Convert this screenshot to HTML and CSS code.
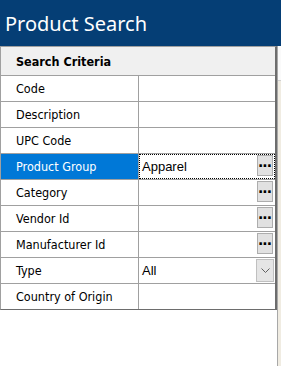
FILE: index.html
```html
<!DOCTYPE html>
<html>
<head>
<meta charset="utf-8">
<link rel="stylesheet" href="styles.css">
</head>
<body>
<div class="titlebar">Product Search</div>
<div class="body">
  <div class="grid">
    <div class="head">Search Criteria</div>
    <div class="row"><div class="label">Code</div><div class="value"></div></div>
    <div class="row"><div class="label">Description</div><div class="value"></div></div>
    <div class="row"><div class="label">UPC Code</div><div class="value"></div></div>
    <div class="row selected"><div class="label">Product Group</div><div class="value focus"><span class="text">Apparel</span><span class="btn ell">&middot;&middot;&middot;</span></div></div>
    <div class="row"><div class="label">Category</div><div class="value"><span class="text"></span><span class="btn ell">&middot;&middot;&middot;</span></div></div>
    <div class="row"><div class="label">Vendor Id</div><div class="value"><span class="text"></span><span class="btn ell">&middot;&middot;&middot;</span></div></div>
    <div class="row"><div class="label">Manufacturer Id</div><div class="value"><span class="text"></span><span class="btn ell">&middot;&middot;&middot;</span></div></div>
    <div class="row"><div class="label">Type</div><div class="value"><span class="text">All</span><span class="btn drop"><svg width="9" height="5" viewBox="0 0 9 5"><path d="M0.5 0.5 L4.5 4.5 L8.5 0.5" fill="none" stroke="#606060" stroke-width="1"/></svg></span></div></div>
    <div class="row"><div class="label">Country of Origin</div><div class="value"></div></div>
  </div>
  <div class="strip"><div class="strip-top"></div></div>
</div>
</body>
</html>
```

FILE: styles.css
```css
html, body {
  margin: 0;
  padding: 0;
  background: #ffffff;
}
body {
  width: 281px;
  height: 366px;
  overflow: hidden;
  font-family: "DejaVu Sans Condensed", "DejaVu Sans", sans-serif;
  font-size: 12.5px;
  color: #000;
}
.titlebar {
  height: 46px;
  background: #053e75;
  color: #ffffff;
  font-family: "Noto Sans", "Open Sans", sans-serif;
  font-size: 20px;
  line-height: 44px;
  padding-top: 2px;
  padding-left: 5px;
  box-sizing: border-box;
}
.body {
  display: flex;
  height: 320px;
}
.grid {
  width: 277px;
  align-self: flex-start;
  border-top: 1px solid #a0a0a0;
  border-left: 1px solid #a0a0a0;
  border-right: 2px solid #6d6d6d;
  border-bottom: 1px solid #6d6d6d;
  box-sizing: border-box;
}
.head {
  height: 29px;
  background: #f0f0f0;
  font-weight: bold;
  padding-left: 15px;
  padding-top: 1px;
  line-height: 27px;
  border-bottom: 1px solid #a0a0a0;
  box-sizing: border-box;
}
.row {
  display: flex;
  height: 26px;
  border-bottom: 1px solid #a0a0a0;
  box-sizing: border-box;
}
.row:last-child {
  border-bottom: none;
  height: 25px;
}
.label {
  width: 138px;
  border-right: 1px solid #a0a0a0;
  padding-left: 15px;
  line-height: 25px;
  box-sizing: border-box;
  white-space: nowrap;
}
.selected .label {
  background: #0078d7;
  color: #ffffff;
}
.value {
  flex: 1;
  display: flex;
  align-items: flex-start;
  padding-left: 3px;
  padding-right: 2px;
  box-sizing: border-box;
}
.value.focus {
  border: 1px dotted #000;
  padding-left: 2px;
  padding-right: 1px;
}
.text {
  flex: 1;
  line-height: 25px;
  font-family: "Liberation Sans", Arial, sans-serif;
  font-size: 13px;
}
.focus .text {
  line-height: 23px;
}
.btn {
  display: flex;
  align-items: center;
  justify-content: center;
  box-sizing: border-box;
  background: #e1e1e1;
  border: 1px solid #adadad;
}
.ell {
  width: 16px;
  height: 21px;
  margin-top: 1px;
  font-weight: bold;
  font-size: 14px;
  letter-spacing: -1px;
  padding-right: 1px;
  line-height: 1;
  font-family: "DejaVu Sans", sans-serif;
}
.focus .ell {
  margin-top: 0;
}
.drop {
  width: 18px;
  height: 23px;
  margin-top: 1px;
  margin-right: -1px;
  background: #e5e5e5;
  border-color: #c0c0c0;
}
.strip {
  width: 4px;
  height: 320px;
  border-left: 1px solid #a8a8a8;
  background: #f0ece2;
  box-sizing: border-box;
}
.strip-top {
  height: 34px;
  background: #fafafa;
  border-bottom: 1px solid #d0d0d0;
}
```
